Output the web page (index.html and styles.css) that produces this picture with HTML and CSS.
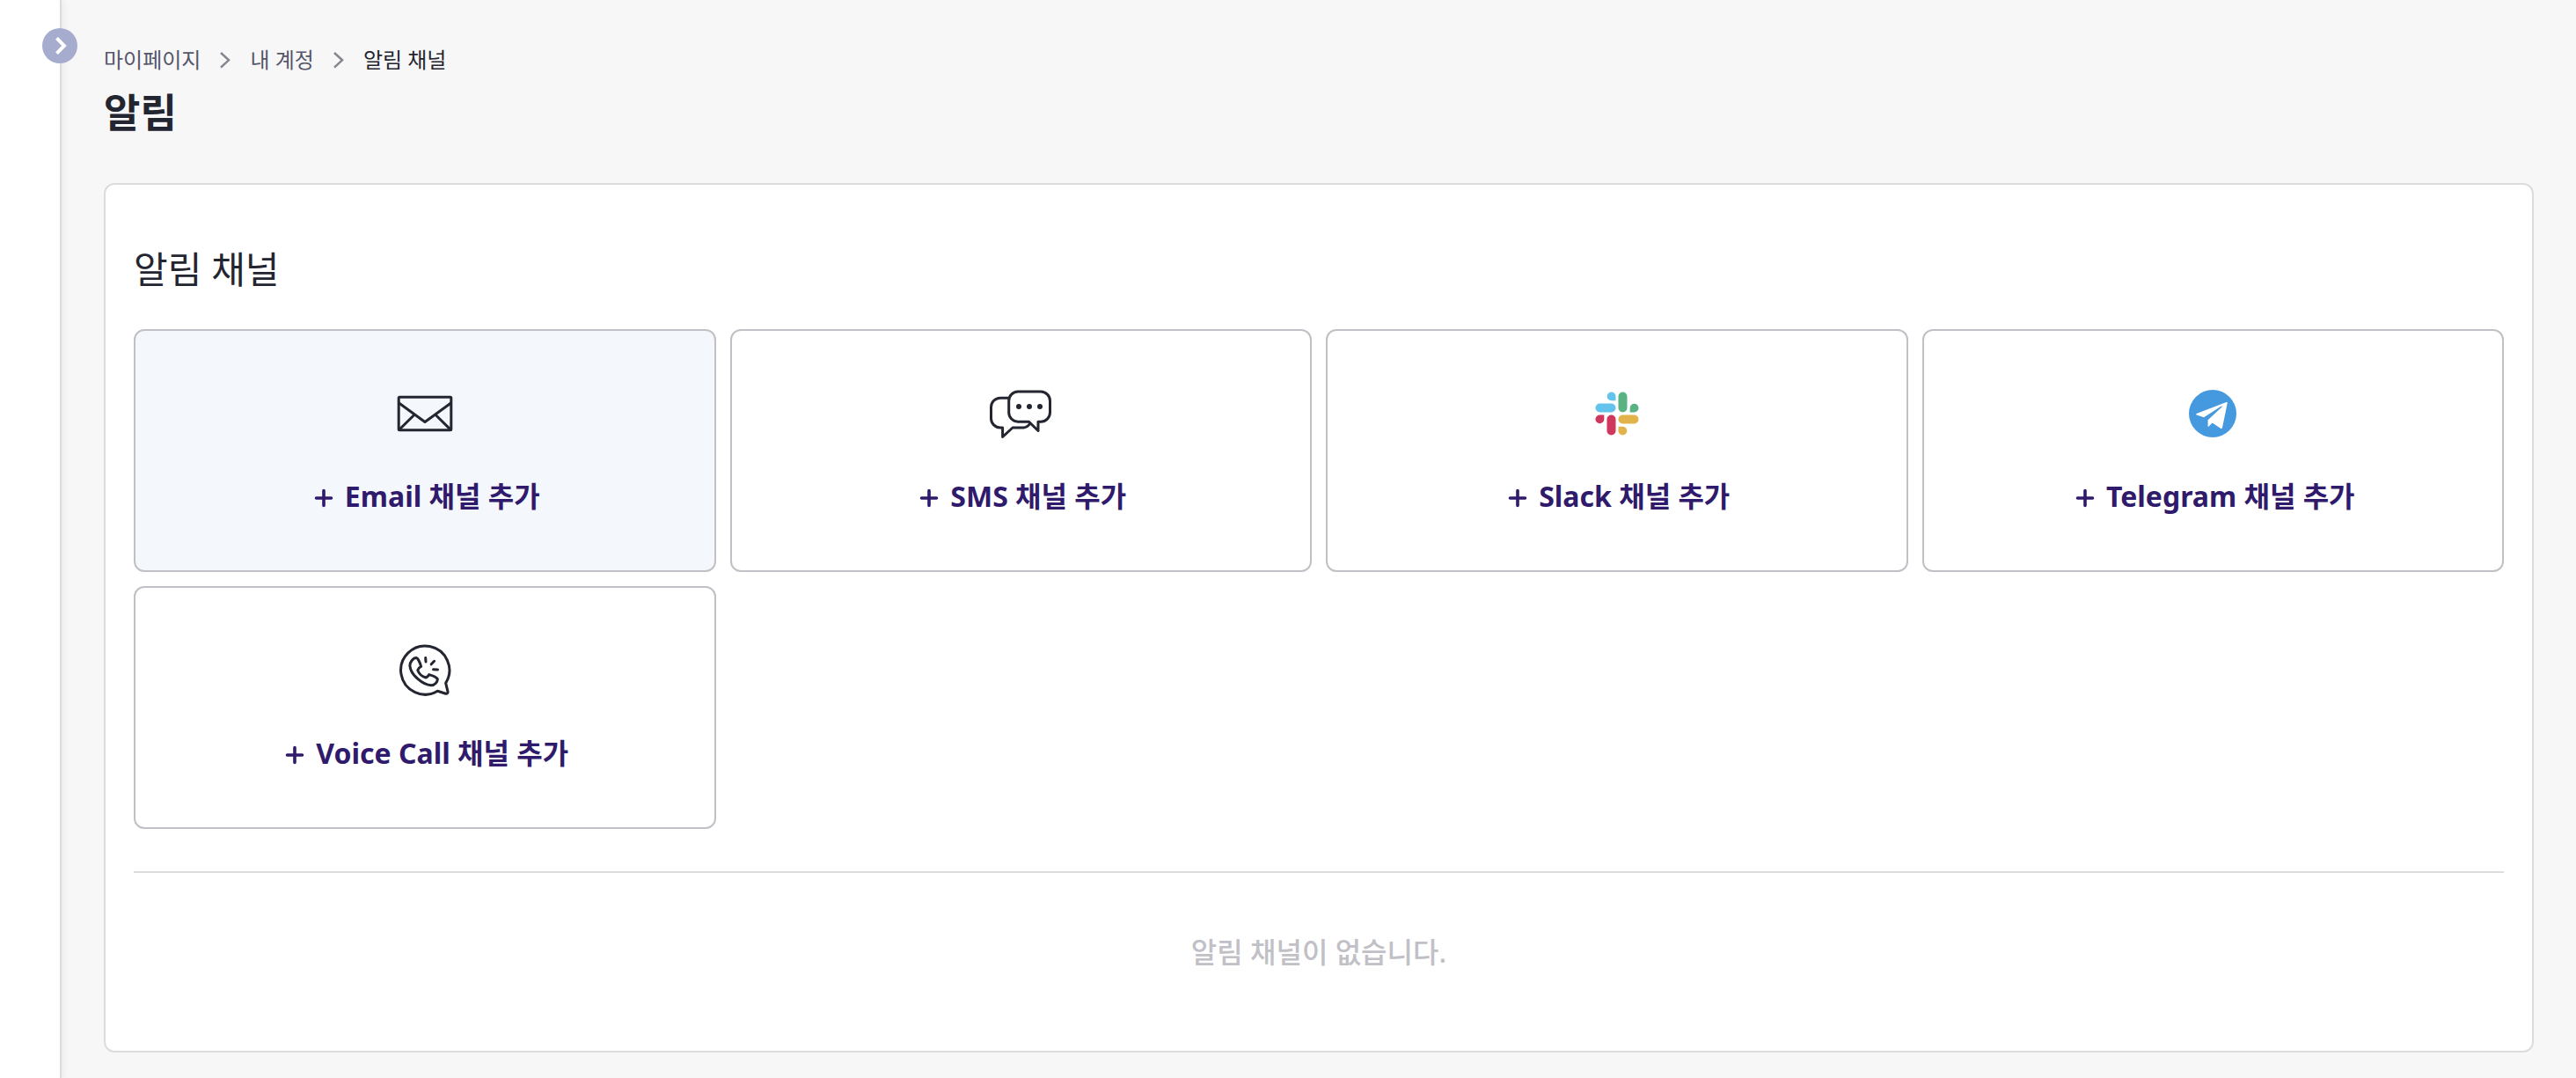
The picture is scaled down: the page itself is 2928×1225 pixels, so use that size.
FILE: index.html
```html
<!DOCTYPE html>
<html lang="ko">
<head>
<meta charset="utf-8">
<title>알림 채널</title>
<link rel="stylesheet" href="styles.css">
</head>
<body>
<div class="layout">
  <aside class="sidebar">
    <button class="sidebar-toggle" type="button" aria-label="메뉴 열기">
      <svg viewBox="0 0 40 40" aria-hidden="true"><path d="M16.5 11.300 25 20l-8.500 8.700"/></svg>
    </button>
  </aside>
  <main class="content">
    <nav class="breadcrumb" aria-label="현재 위치">
      <a href="#mypage">마이페이지</a>
      <svg viewBox="0 0 24 24" aria-hidden="true"><path d="M7 4l9 8.300L7 20.600"/></svg>
      <a href="#account">내 계정</a>
      <svg viewBox="0 0 24 24" aria-hidden="true"><path d="M7 4l9 8.300L7 20.600"/></svg>
      <a href="#channels" class="current" aria-current="page">알림 채널</a>
    </nav>
    <h1 class="page-title">알림</h1>

    <section class="panel">
      <h2 class="panel-title">알림 채널</h2>
      <div class="channels">
        <button class="channel selected" type="button">
          <svg class="channel-icon" viewBox="0 0 72 72" aria-hidden="true">
            <rect x="6.200" y="17.200" width="59.600" height="37.600" rx="1"/>
            <path d="M6.500 24 36 45.500 65.500 24M7 54 24.300 37M65 54 47.700 37"/>
          </svg>
          <span class="channel-label"><svg class="plus" viewBox="0 0 32 32" aria-hidden="true"><path d="M16 7.500v17M7.500 16h17"/></svg>Email 채널 추가</span>
        </button>
        <button class="channel" type="button">
          <svg class="channel-icon" viewBox="0 0 72 72" aria-hidden="true">
            <path d="M22 18.200H13A10.500 10.500 0 0 0 2.500 28.700V41.500A10.500 10.500 0 0 0 13 52H15.600V62.500L27 52H39.500Q44 51.500 47 47"/>
            <path d="M33 11H59A10.500 10.500 0 0 1 69.500 21.500V34.700A10.500 10.500 0 0 1 59 45.200H56V55.500L45.500 45.200H33A10.500 10.500 0 0 1 22.700 34.700V21.500A10.500 10.500 0 0 1 33 11Z"/>
            <g class="dots"><circle cx="34" cy="28" r="3"/><circle cx="46" cy="28" r="3"/><circle cx="58" cy="28" r="3"/></g>
          </svg>
          <span class="channel-label"><svg class="plus" viewBox="0 0 32 32" aria-hidden="true"><path d="M16 7.500v17M7.500 16h17"/></svg>SMS 채널 추가</span>
        </button>
        <button class="channel" type="button">
          <svg class="channel-icon logo" viewBox="0 0 72 72" aria-hidden="true">
            <defs>
              <g id="slack-arm">
                <rect x="11.500" y="24.500" width="23" height="10" rx="5"/>
                <path d="M34.500 21.300H29.600A4.900 4.900 0 1 1 34.500 16.400Z"/>
              </g>
            </defs>
            <use href="#slack-arm" fill="#63c3ec"/>
            <use href="#slack-arm" fill="#59b281" transform="rotate(90 36 36)"/>
            <use href="#slack-arm" fill="#e3b34b" transform="rotate(180 36 36)"/>
            <use href="#slack-arm" fill="#cf375d" transform="rotate(270 36 36)"/>
          </svg>
          <span class="channel-label"><svg class="plus" viewBox="0 0 32 32" aria-hidden="true"><path d="M16 7.500v17M7.500 16h17"/></svg>Slack 채널 추가</span>
        </button>
        <button class="channel" type="button">
          <svg class="channel-icon logo" viewBox="0 0 72 72" aria-hidden="true">
            <circle cx="36" cy="36" r="27" fill="#4599df"/>
            <path fill="#fff" d="M51.500 23.100Q53 22.700 52.700 24.200L47 52Q46.500 53.800 45 52.800L35.600 46.500 31.700 50.600Q30.700 51.300 30.600 50V43.200L46.800 28.300Q47.300 27 45.500 27.700L26 40.200 17.700 37.400Q16.300 36.700 17.700 36Z"/>
          </svg>
          <span class="channel-label"><svg class="plus" viewBox="0 0 32 32" aria-hidden="true"><path d="M16 7.500v17M7.500 16h17"/></svg>Telegram 채널 추가</span>
        </button>
        <button class="channel" type="button">
          <svg class="channel-icon" viewBox="0 0 72 72" aria-hidden="true">
            <path d="M50.300 59.300A27.600 27.600 0 1 1 59.600 50.200L62 59.800Q62.300 62.500 59.600 62.200Z"/>
            <path d="M26.500 21.600C28 22 30.500 27.500 31.600 31.300Q29 32.500 27.800 35.500C29 39.500 33 43 37 44Q39.500 43 40.700 40.600C44 41.500 49 43.500 50.300 45.600C50.500 49 47 53 43 52.800C34 52.500 19.500 41 18.900 30.500C18.800 26.500 22.500 21.500 26.500 21.600Z"/>
            <path d="M36.700 21.500 37 26M46.600 25.300 43.200 28.800M45.600 34.800 50.500 35"/>
          </svg>
          <span class="channel-label"><svg class="plus" viewBox="0 0 32 32" aria-hidden="true"><path d="M16 7.500v17M7.500 16h17"/></svg>Voice Call 채널 추가</span>
        </button>
      </div>
      <p class="empty">알림 채널이 없습니다.</p>
    </section>
  </main>
</div>
</body>
</html>
```
FILE: styles.css
```css
* {
  box-sizing: border-box;
}

body {
  margin: 0;
  background: #f7f7f7;
  color: #232530;
  font-family: "Noto Sans", "Noto Sans CJK KR", sans-serif;
  font-size: 24px;
}

svg {
  display: block;
  flex: none;
  fill: none;
  stroke: currentColor;
}

.layout {
  display: flex;
  min-height: 100vh;
}

.sidebar {
  position: relative;
  flex: none;
  width: 70px;
  background: #fff;
  border-right: 2px solid #dcdcdd;
  box-shadow: 2px 0 8px rgba(0, 0, 0, 0.06);
}

.sidebar-toggle {
  position: absolute;
  top: 32px;
  right: -20px;
  width: 40px;
  height: 40px;
  padding: 0;
  border: 0;
  border-radius: 50%;
  background: #a6accd;
  color: #fff;
  cursor: pointer;
}

.sidebar-toggle svg {
  stroke-width: 4;
}

.content {
  flex: 1;
  min-width: 0;
  padding: 48px 48px 28px;
}

.breadcrumb {
  display: flex;
  align-items: center;
  gap: 16px;
  line-height: 40px;
}

.breadcrumb a {
  color: #55566a;
  text-decoration: none;
}

.breadcrumb a.current {
  color: #232530;
}

.breadcrumb svg {
  width: 24px;
  height: 24px;
  color: #85858f;
  stroke-width: 2.5;
}

.page-title {
  margin: 8px 0 48px;
  font-size: 45px;
  line-height: 64px;
  font-weight: 700;
}

.panel {
  padding: 64px 32px 88px;
  border: 2px solid #dcdcdd;
  border-radius: 12px;
  background: #fff;
}

.panel-title {
  margin: 0 0 36px;
  font-size: 42px;
  line-height: 64px;
  font-weight: 400;
}

.channels {
  display: grid;
  grid-template-columns: repeat(4, 1fr);
  gap: 16px;
  padding-bottom: 48px;
  border-bottom: 2px solid #dcdcdd;
}

.channel {
  display: flex;
  flex-direction: column;
  align-items: center;
  gap: 34px;
  padding: 58px 16px 60px;
  border: 2px solid #c0c0c6;
  border-radius: 12px;
  background: #fff;
  color: #232530;
  font: inherit;
  cursor: pointer;
}

.channel.selected {
  background: #f4f7fc;
}

.channel-icon {
  width: 72px;
  height: 72px;
  stroke-width: 3;
  stroke-linejoin: round;
  stroke-linecap: round;
}

.channel-icon.logo {
  stroke: none;
}

.dots {
  fill: currentColor;
  stroke: none;
}

.channel-label {
  display: flex;
  align-items: center;
  gap: 8px;
  color: #2f1a6b;
  font-size: 32px;
  line-height: 48px;
  font-weight: 700;
}

.plus {
  width: 32px;
  height: 32px;
  margin-top: 4px;
  stroke-width: 3.6;
  stroke-linecap: round;
}

.empty {
  margin: 66px 0 0;
  color: #c0c0c6;
  font-size: 32px;
  line-height: 48px;
  font-weight: 500;
  text-align: center;
}
```
